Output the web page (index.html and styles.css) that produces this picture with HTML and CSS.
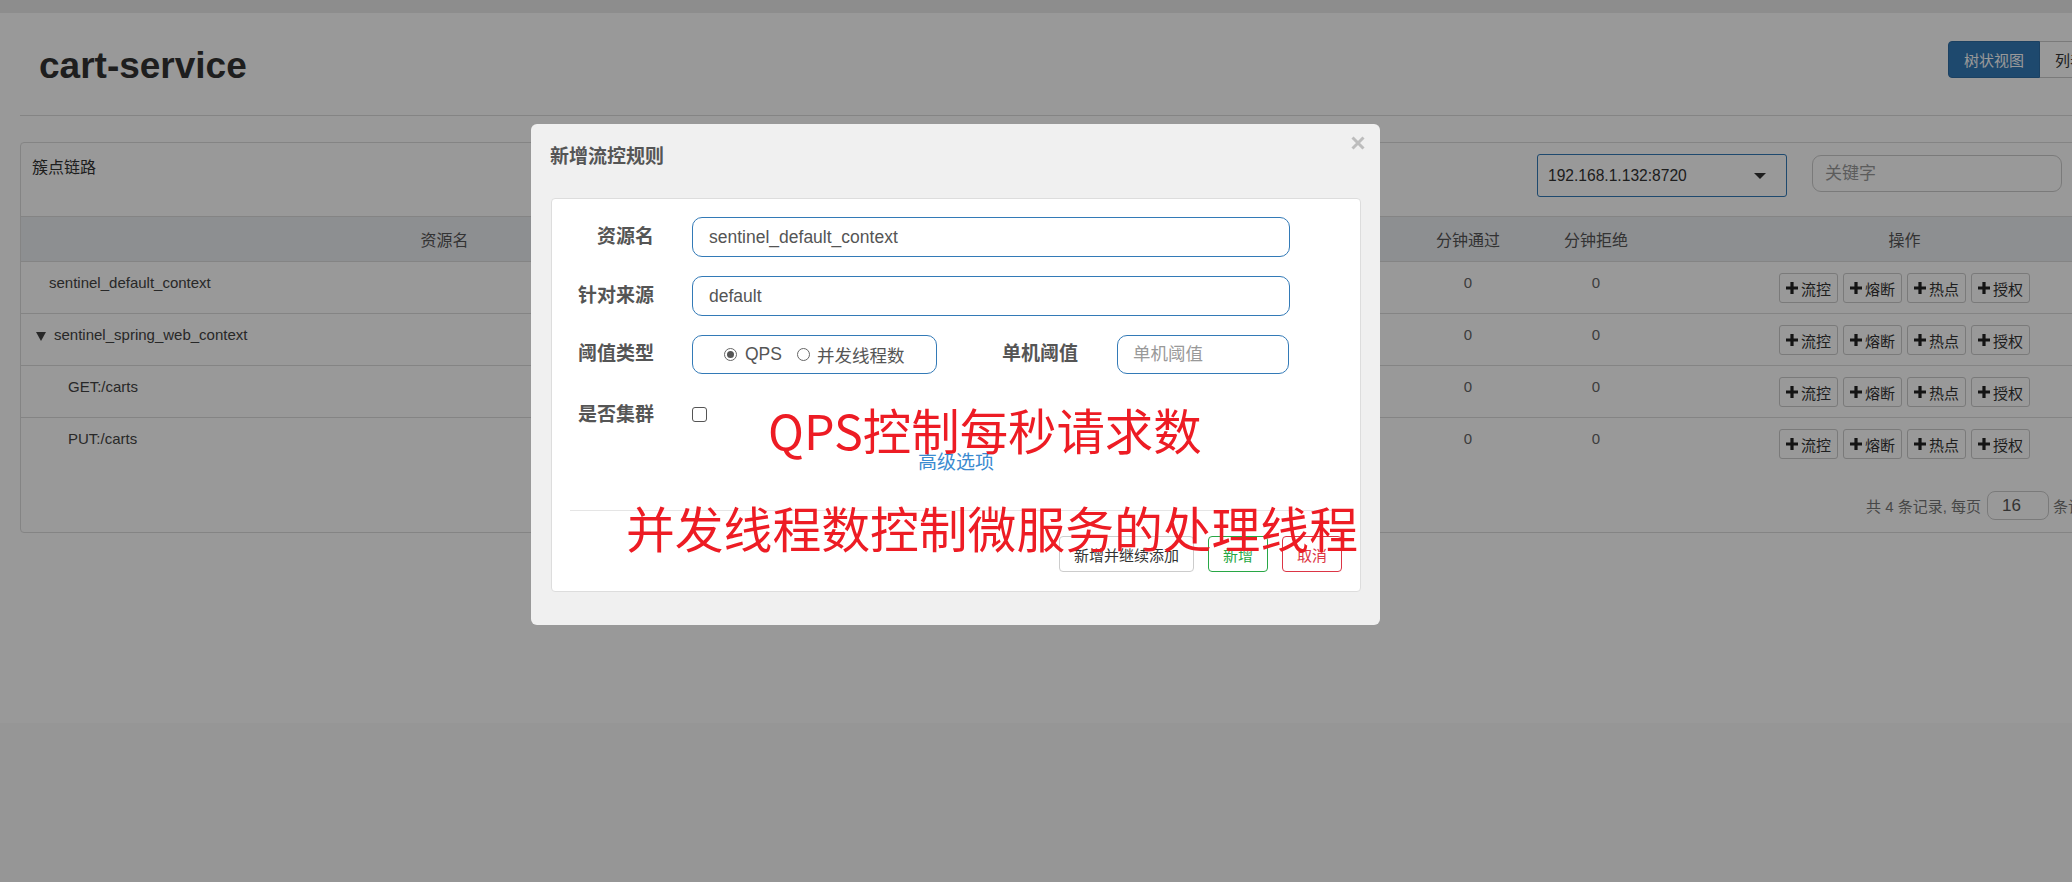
FILE: index.html
```html
<!DOCTYPE html>
<html lang="zh-CN">
<head>
<meta charset="utf-8">
<title>cart-service</title>
<link rel="stylesheet" href="styles.css">
</head>
<body>
<div class="app">
  <div class="topbar"></div>
  <div class="page">
    <div class="page-head">
      <h1 class="title">cart-service</h1>
      <div class="view-toggle">
        <button class="tg tg-active">树状视图</button>
        <button class="tg">列表视图</button>
      </div>
    </div>
    <div class="divider"></div>
    <div class="panel">
      <div class="panel-heading">
        <span class="panel-title">簇点链路</span>
        <div class="tools">
          <div class="machine-select"><span>192.168.1.132:8720</span><span class="caret"></span></div>
          <input class="search" placeholder="关键字">
        </div>
      </div>
      <div class="grid-head">
        <div>资源名</div><div>通过QPS</div><div>拒绝QPS</div><div>并发数</div><div>平均RT</div><div>分钟通过</div><div>分钟拒绝</div><div>操作</div>
      </div>

      <div class="grid-row">
        <div class="cell name lvl1">sentinel_default_context</div>
        <div class="cell">0</div><div class="cell">0</div><div class="cell">0</div><div class="cell">0</div>
        <div class="cell">0</div><div class="cell">0</div>
        <div class="ops">
          <button class="op-btn"><svg class="plus" viewBox="0 0 12 12"><path d="M4.4 0h3.2v4.4H12v3.2H7.6V12H4.4V7.6H0V4.4h4.4z"/></svg>流控</button>
          <button class="op-btn"><svg class="plus" viewBox="0 0 12 12"><path d="M4.4 0h3.2v4.4H12v3.2H7.6V12H4.4V7.6H0V4.4h4.4z"/></svg>熔断</button>
          <button class="op-btn"><svg class="plus" viewBox="0 0 12 12"><path d="M4.4 0h3.2v4.4H12v3.2H7.6V12H4.4V7.6H0V4.4h4.4z"/></svg>热点</button>
          <button class="op-btn"><svg class="plus" viewBox="0 0 12 12"><path d="M4.4 0h3.2v4.4H12v3.2H7.6V12H4.4V7.6H0V4.4h4.4z"/></svg>授权</button>
        </div>
      </div>

      <div class="grid-row">
        <div class="cell name lvl-tree"><span class="tri"></span>sentinel_spring_web_context</div>
        <div class="cell">0</div><div class="cell">0</div><div class="cell">0</div><div class="cell">0</div>
        <div class="cell">0</div><div class="cell">0</div>
        <div class="ops">
          <button class="op-btn"><svg class="plus" viewBox="0 0 12 12"><path d="M4.4 0h3.2v4.4H12v3.2H7.6V12H4.4V7.6H0V4.4h4.4z"/></svg>流控</button>
          <button class="op-btn"><svg class="plus" viewBox="0 0 12 12"><path d="M4.4 0h3.2v4.4H12v3.2H7.6V12H4.4V7.6H0V4.4h4.4z"/></svg>熔断</button>
          <button class="op-btn"><svg class="plus" viewBox="0 0 12 12"><path d="M4.4 0h3.2v4.4H12v3.2H7.6V12H4.4V7.6H0V4.4h4.4z"/></svg>热点</button>
          <button class="op-btn"><svg class="plus" viewBox="0 0 12 12"><path d="M4.4 0h3.2v4.4H12v3.2H7.6V12H4.4V7.6H0V4.4h4.4z"/></svg>授权</button>
        </div>
      </div>

      <div class="grid-row">
        <div class="cell name lvl2">GET:/carts</div>
        <div class="cell">0</div><div class="cell">0</div><div class="cell">0</div><div class="cell">0</div>
        <div class="cell">0</div><div class="cell">0</div>
        <div class="ops">
          <button class="op-btn"><svg class="plus" viewBox="0 0 12 12"><path d="M4.4 0h3.2v4.4H12v3.2H7.6V12H4.4V7.6H0V4.4h4.4z"/></svg>流控</button>
          <button class="op-btn"><svg class="plus" viewBox="0 0 12 12"><path d="M4.4 0h3.2v4.4H12v3.2H7.6V12H4.4V7.6H0V4.4h4.4z"/></svg>熔断</button>
          <button class="op-btn"><svg class="plus" viewBox="0 0 12 12"><path d="M4.4 0h3.2v4.4H12v3.2H7.6V12H4.4V7.6H0V4.4h4.4z"/></svg>热点</button>
          <button class="op-btn"><svg class="plus" viewBox="0 0 12 12"><path d="M4.4 0h3.2v4.4H12v3.2H7.6V12H4.4V7.6H0V4.4h4.4z"/></svg>授权</button>
        </div>
      </div>

      <div class="grid-row last">
        <div class="cell name lvl2">PUT:/carts</div>
        <div class="cell">0</div><div class="cell">0</div><div class="cell">0</div><div class="cell">0</div>
        <div class="cell">0</div><div class="cell">0</div>
        <div class="ops">
          <button class="op-btn"><svg class="plus" viewBox="0 0 12 12"><path d="M4.4 0h3.2v4.4H12v3.2H7.6V12H4.4V7.6H0V4.4h4.4z"/></svg>流控</button>
          <button class="op-btn"><svg class="plus" viewBox="0 0 12 12"><path d="M4.4 0h3.2v4.4H12v3.2H7.6V12H4.4V7.6H0V4.4h4.4z"/></svg>熔断</button>
          <button class="op-btn"><svg class="plus" viewBox="0 0 12 12"><path d="M4.4 0h3.2v4.4H12v3.2H7.6V12H4.4V7.6H0V4.4h4.4z"/></svg>热点</button>
          <button class="op-btn"><svg class="plus" viewBox="0 0 12 12"><path d="M4.4 0h3.2v4.4H12v3.2H7.6V12H4.4V7.6H0V4.4h4.4z"/></svg>授权</button>
        </div>
      </div>

      <div class="pager">
        <span>共 4 条记录, 每页</span><input class="page-size" value="16"><span>条记录</span>
      </div>
    </div>
  </div>
</div>

<div class="backdrop"></div>

<div class="modal">
  <div class="modal-title">新增流控规则</div>
  <svg class="modal-close" viewBox="0 0 14 14"><path d="M1.5 1.5l11 11M12.5 1.5l-11 11"/></svg>
  <div class="form-panel">
    <div class="form-row">
      <label class="label">资源名</label>
      <input class="txt txt-wide" value="sentinel_default_context">
    </div>
    <div class="form-row">
      <label class="label">针对来源</label>
      <input class="txt txt-wide" value="default">
    </div>
    <div class="form-row">
      <label class="label">阈值类型</label>
      <div class="radio-box">
        <span class="radio checked"></span><span class="radio-text">QPS</span>
        <span class="radio second"></span><span class="radio-text second-text">并发线程数</span>
      </div>
      <label class="label label-inline">单机阈值</label>
      <input class="txt txt-small" placeholder="单机阈值">
    </div>
    <div class="form-row form-row-check">
      <label class="label">是否集群</label>
      <span class="checkbox"></span>
    </div>
    <div class="adv-link">高级选项</div>
    <div class="sep"></div>
    <div class="actions">
      <button class="btn btn-default">新增并继续添加</button>
      <button class="btn btn-ok">新增</button>
      <button class="btn btn-cancel">取消</button>
    </div>
  </div>
  <div class="note note-qps">QPS控制每秒请求数</div>
  <div class="note note-thread">并发线程数控制微服务的处理线程</div>
</div>
</body>
</html>
```

FILE: styles.css
```css
html, body {
  margin: 0;
  padding: 0;
  overflow: hidden;
}

body {
  width: 2072px;
  height: 882px;
  background: #fafafa;
  font-family: "Liberation Sans", Arial, "Noto Sans CJK SC", sans-serif;
  color: #333;
}

button, input {
  font-family: "Liberation Sans", Arial, "Noto Sans CJK SC", sans-serif;
}

.app {
  width: 2200px;
  height: 723px;
  background: #fff;
}

.topbar {
  height: 13px;
  background: #ebebeb;
}

.page {
  margin-left: 20px;
  width: 2130px;
}

.page-head {
  display: flex;
  justify-content: space-between;
  align-items: flex-start;
  padding-top: 28px;
}

.title {
  margin: 5px 0 0 19px;
  font-size: 37px;
  line-height: 40px;
  font-weight: bold;
  color: #333;
}

.view-toggle {
  display: flex;
  margin-right: 19px;
}

.tg {
  height: 37px;
  padding: 0 15px;
  font-size: 15px;
  border: 1px solid #ccc;
  background: #fff;
  color: #333;
  border-radius: 0 4px 4px 0;
}

.tg-active {
  background: #337ab7;
  border-color: #2e6da4;
  color: #fff;
  border-radius: 4px 0 0 4px;
}

.tg + .tg {
  border-left: 0;
}

.divider {
  margin-top: 29px;
  border-top: 1px solid #ddd;
}

.panel {
  margin-top: 26px;
  border: 1px solid #ddd;
  border-radius: 4px;
  background: #fff;
}

.panel-heading {
  display: flex;
  height: 74px;
  box-sizing: border-box;
  padding: 11px 87px 0 11px;
  border-bottom: 1px solid #ddd;
}

.panel-title {
  font-size: 16px;
  line-height: 22px;
  margin-top: 3px;
  color: #333;
}

.tools {
  margin-left: auto;
  display: flex;
  gap: 25px;
  align-items: flex-start;
}

.machine-select {
  width: 250px;
  height: 43px;
  box-sizing: border-box;
  border: 1px solid #337ab7;
  border-radius: 3px;
  display: flex;
  align-items: center;
  justify-content: space-between;
  padding: 0 20px 0 10px;
  font-size: 15.6px;
  color: #333;
}

.caret {
  width: 0;
  height: 0;
  border-top: 6px solid #333;
  border-left: 6px solid transparent;
  border-right: 6px solid transparent;
}

.search {
  width: 250px;
  height: 37px;
  margin-top: 1px;
  box-sizing: border-box;
  border: 1px solid #ccc;
  border-radius: 9px;
  padding: 0 12px;
  font-size: 17px;
  color: #555;
  outline: none;
}

.search::placeholder {
  color: #999;
}

.grid-head,
.grid-row {
  display: grid;
  grid-template-columns: 847px 134px 134px 134px 134px 128px 128px 489px;
}

.grid-head {
  height: 44px;
  align-items: center;
  text-align: center;
  background: #eceef2;
  border-bottom: 1px solid #ddd;
  font-size: 16px;
  color: #555;
}

.grid-row {
  height: 51px;
  border-bottom: 1px solid #ddd;
}

.grid-row.last {
  border-bottom: 0;
}

.cell {
  padding-top: 11px;
  line-height: 20px;
  font-size: 15px;
  text-align: center;
  color: #666;
}

.cell.name {
  text-align: left;
  color: #444;
  display: flex;
  align-items: center;
  height: 20px;
}

.lvl1 {
  padding-left: 28px;
}

.lvl-tree {
  padding-left: 15px;
}

.lvl2 {
  padding-left: 47px;
}

.tri {
  width: 0;
  height: 0;
  border-top: 9px solid #444;
  border-left: 5px solid transparent;
  border-right: 5px solid transparent;
  margin: 2px 8px 0 0;
}

.ops {
  display: flex;
  justify-content: center;
  gap: 5px;
  padding-top: 11px;
  align-items: flex-start;
}

.op-btn {
  display: inline-flex;
  align-items: center;
  gap: 3px;
  height: 30px;
  box-sizing: border-box;
  padding: 0 6px;
  border: 1px solid #ccc;
  border-radius: 3px;
  background: #fff;
  font-size: 15px;
  color: #333;
}

.plus {
  width: 12px;
  height: 12px;
  fill: #222;
}

.pager {
  display: flex;
  justify-content: flex-end;
  align-items: center;
  padding: 22px 51px 12px 0;
  font-size: 15px;
  color: #777;
}

.page-size {
  width: 62px;
  height: 29px;
  box-sizing: border-box;
  margin: 0 4px 0 6px;
  border: 1px solid #ccc;
  border-radius: 8px;
  padding: 0 0 0 14px;
  font-size: 17px;
  color: #555;
}

.backdrop {
  position: fixed;
  left: 0;
  top: 0;
  right: 0;
  bottom: 0;
  background: rgba(0, 0, 0, 0.4);
}

.modal {
  position: fixed;
  left: 531px;
  top: 124px;
  width: 849px;
  height: 501px;
  box-sizing: border-box;
  background: #f0f0f0;
  border-radius: 6px;
  padding: 21px 19px 0 20px;
  font-family: "Liberation Sans", Arial, "Noto Sans CJK SC", sans-serif;
}

.modal-title {
  font-size: 19px;
  line-height: 24px;
  font-weight: bold;
  color: #555;
  margin: 0 0 29px -1px;
}

.modal-close {
  position: absolute;
  top: 12px;
  right: 15px;
  width: 14px;
  height: 14px;
  stroke: #bdbdbd;
  stroke-width: 3;
  fill: none;
}

.form-panel {
  background: #fff;
  border: 1px solid #ddd;
  border-radius: 4px;
  padding: 18px 18px 19px;
}

.form-row {
  display: flex;
  align-items: center;
  height: 40px;
  margin-bottom: 18px;
}

.form-row:first-child {
  margin-bottom: 19px;
}

.form-row-check {
  align-items: flex-start;
  height: auto;
  padding-top: 11px;
  margin-bottom: 0;
}

.label {
  width: 84px;
  flex: none;
  margin-right: 38px;
  text-align: right;
  font-size: 19px;
  line-height: 24px;
  font-weight: bold;
  color: #555;
}

.label-inline {
  width: auto;
  margin-left: 65px;
  margin-right: 39px;
}

.txt {
  box-sizing: border-box;
  height: 40px;
  border: 1px solid #337ab7;
  border-radius: 10px;
  padding: 0 16px;
  font-size: 17.5px;
  color: #555;
  outline: none;
  background: #fff;
}

.txt-wide {
  width: 598px;
}

.txt-small {
  width: 172px;
  height: 39px;
  padding-left: 15px;
}

.txt::placeholder {
  color: #999;
}

.radio-box {
  box-sizing: border-box;
  width: 245px;
  height: 39px;
  border: 1px solid #337ab7;
  border-radius: 10px;
  display: flex;
  align-items: center;
  padding-left: 31px;
  font-size: 17.5px;
  color: #555;
}

.radio {
  box-sizing: border-box;
  width: 13px;
  height: 13px;
  border: 1px solid #666;
  border-radius: 50%;
  display: flex;
  align-items: center;
  justify-content: center;
  flex: none;
}

.radio.checked::after {
  content: "";
  width: 7px;
  height: 7px;
  border-radius: 50%;
  background: #555;
}

.radio-text {
  margin-left: 8px;
}

.radio.second {
  margin-left: 15px;
}

.second-text {
  margin-left: 7px;
}

.checkbox {
  box-sizing: border-box;
  width: 15px;
  height: 15px;
  margin-top: 4px;
  border: 1px solid #555;
  border-radius: 3px;
  background: #fff;
}

.adv-link {
  margin-top: 24px;
  text-align: center;
  line-height: 24px;
  font-size: 19px;
  color: #3b8bd0;
}

.sep {
  margin-top: 35px;
  border-top: 1px solid #e5e5e5;
}

.actions {
  display: flex;
  justify-content: flex-end;
  gap: 14px;
  margin-top: 25px;
}

.btn {
  height: 36px;
  padding: 0 14px;
  font-size: 15px;
  border: 1px solid #ccc;
  border-radius: 4px;
  background: #fff;
  color: #333;
}

.btn-ok {
  border-color: #28a745;
  color: #28a745;
}

.btn-cancel {
  border-color: #dc3545;
  color: #dc3545;
}

.note {
  position: absolute;
  color: #ed1c24;
  font-family: "Noto Sans CJK SC", sans-serif;
  line-height: 48px;
  white-space: nowrap;
}

.note-qps {
  left: 237px;
  top: 281px;
  font-size: 48.4px;
}

.note-thread {
  left: 95px;
  top: 379px;
  font-size: 48.8px;
}
```
